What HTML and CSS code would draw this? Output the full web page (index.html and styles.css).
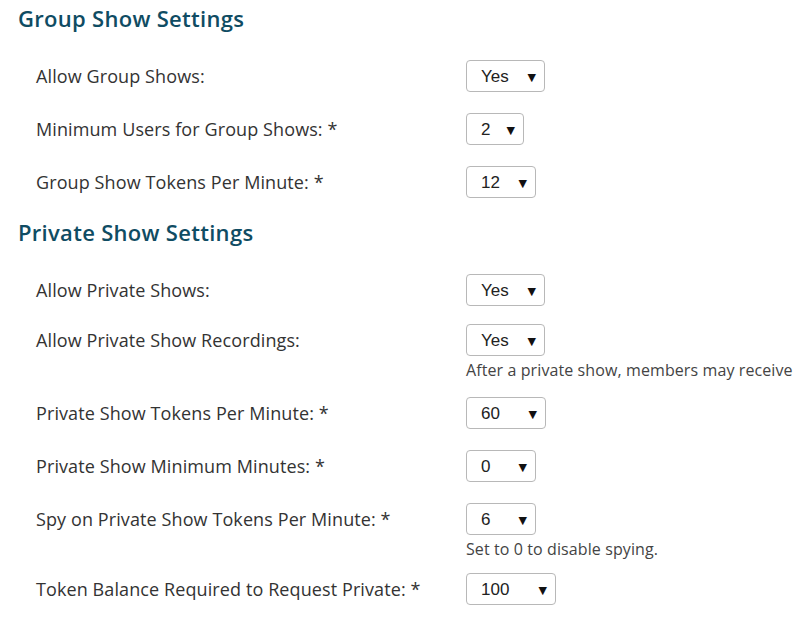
FILE: index.html
```html
<!DOCTYPE html>
<html lang="en">
<head>
  <meta charset="UTF-8" />
  <title>Show Settings</title>
  <link rel="stylesheet" href="styles.css">
</head>
<body>

  <div class="settings">
    <h2>Group Show Settings</h2>

    <div class="row">
      <label>Allow Group Shows:</label>
      <div class="field">
        <span class="pick w-yes"><select><option>Yes</option><option>No</option></select></span>
      </div>
    </div>

    <div class="row">
      <label>Minimum Users for Group Shows: *</label>
      <div class="field">
        <span class="pick w-1"><select><option>2</option></select></span>
      </div>
    </div>

    <div class="row">
      <label>Group Show Tokens Per Minute: *</label>
      <div class="field">
        <span class="pick w-2"><select><option>12</option></select></span>
      </div>
    </div>

    <h2>Private Show Settings</h2>

    <div class="row tight">
      <label>Allow Private Shows:</label>
      <div class="field">
        <span class="pick w-yes"><select><option>Yes</option><option>No</option></select></span>
      </div>
    </div>

    <div class="row has-help">
      <label>Allow Private Show Recordings:</label>
      <div class="field">
        <span class="pick w-yes"><select><option>Yes</option><option>No</option></select></span>
        <div class="help">After a private show, members may receive</div>
      </div>
    </div>

    <div class="row">
      <label>Private Show Tokens Per Minute: *</label>
      <div class="field">
        <span class="pick w-60"><select><option>60</option></select></span>
      </div>
    </div>

    <div class="row">
      <label>Private Show Minimum Minutes: *</label>
      <div class="field">
        <span class="pick w-2"><select><option>0</option></select></span>
      </div>
    </div>

    <div class="row has-help short">
      <label>Spy on Private Show Tokens Per Minute: *</label>
      <div class="field">
        <span class="pick w-2"><select><option>6</option></select></span>
        <div class="help">Set to 0 to disable spying.</div>
      </div>
    </div>

    <div class="row">
      <label>Token Balance Required to Request Private: *</label>
      <div class="field">
        <span class="pick w-3"><select><option>100</option></select></span>
      </div>
    </div>
  </div>

</body>
</html>
```

FILE: styles.css
```css
body {
  font-family: "Open Sans", "DejaVu Sans", sans-serif;
  background: #fff;
  color: #333;
  margin: 0;
}
.settings {
  padding: 0 0 0 18px;
}
h2 {
  font-size: 22px;
  font-weight: 600;
  letter-spacing: 0.3px;
  color: #0f4c63;
  margin: 5px 0 29px;
  line-height: 26px;
}
.row {
  display: grid;
  grid-template-columns: 430px auto;
  padding-left: 18px;
  margin-bottom: 21px;
}
.row.tight {
  margin-bottom: 18px;
}
.row.has-help {
  margin-bottom: 18px;
}
.row.has-help.short {
  margin-bottom: 15px;
}
.row label {
  font-size: 18px;
  letter-spacing: 0.1px;
  line-height: 32px;
}
.help {
  font-size: 16px;
  letter-spacing: 0.1px;
  color: #444;
  line-height: 18px;
  margin-top: 5px;
  white-space: nowrap;
}
.pick {
  position: relative;
  display: inline-block;
}
.pick::after {
  content: "\25BC";
  position: absolute;
  right: 9px;
  top: 9px;
  font-size: 11px;
  color: #111;
  pointer-events: none;
}
.pick select {
  appearance: none;
  -webkit-appearance: none;
  width: 100%;
  height: 32px;
  padding: 0 0 0 14px;
  font-family: "Liberation Sans", Arial, sans-serif;
  font-size: 17px;
  color: #222;
  background: #fff;
  border: 1px solid #b8b8b8;
  border-radius: 4px;
}
.w-yes { width: 79px; }
.w-1 { width: 58px; }
.w-2 { width: 70px; }
.w-60 { width: 80px; }
.w-3 { width: 90px; }
```
